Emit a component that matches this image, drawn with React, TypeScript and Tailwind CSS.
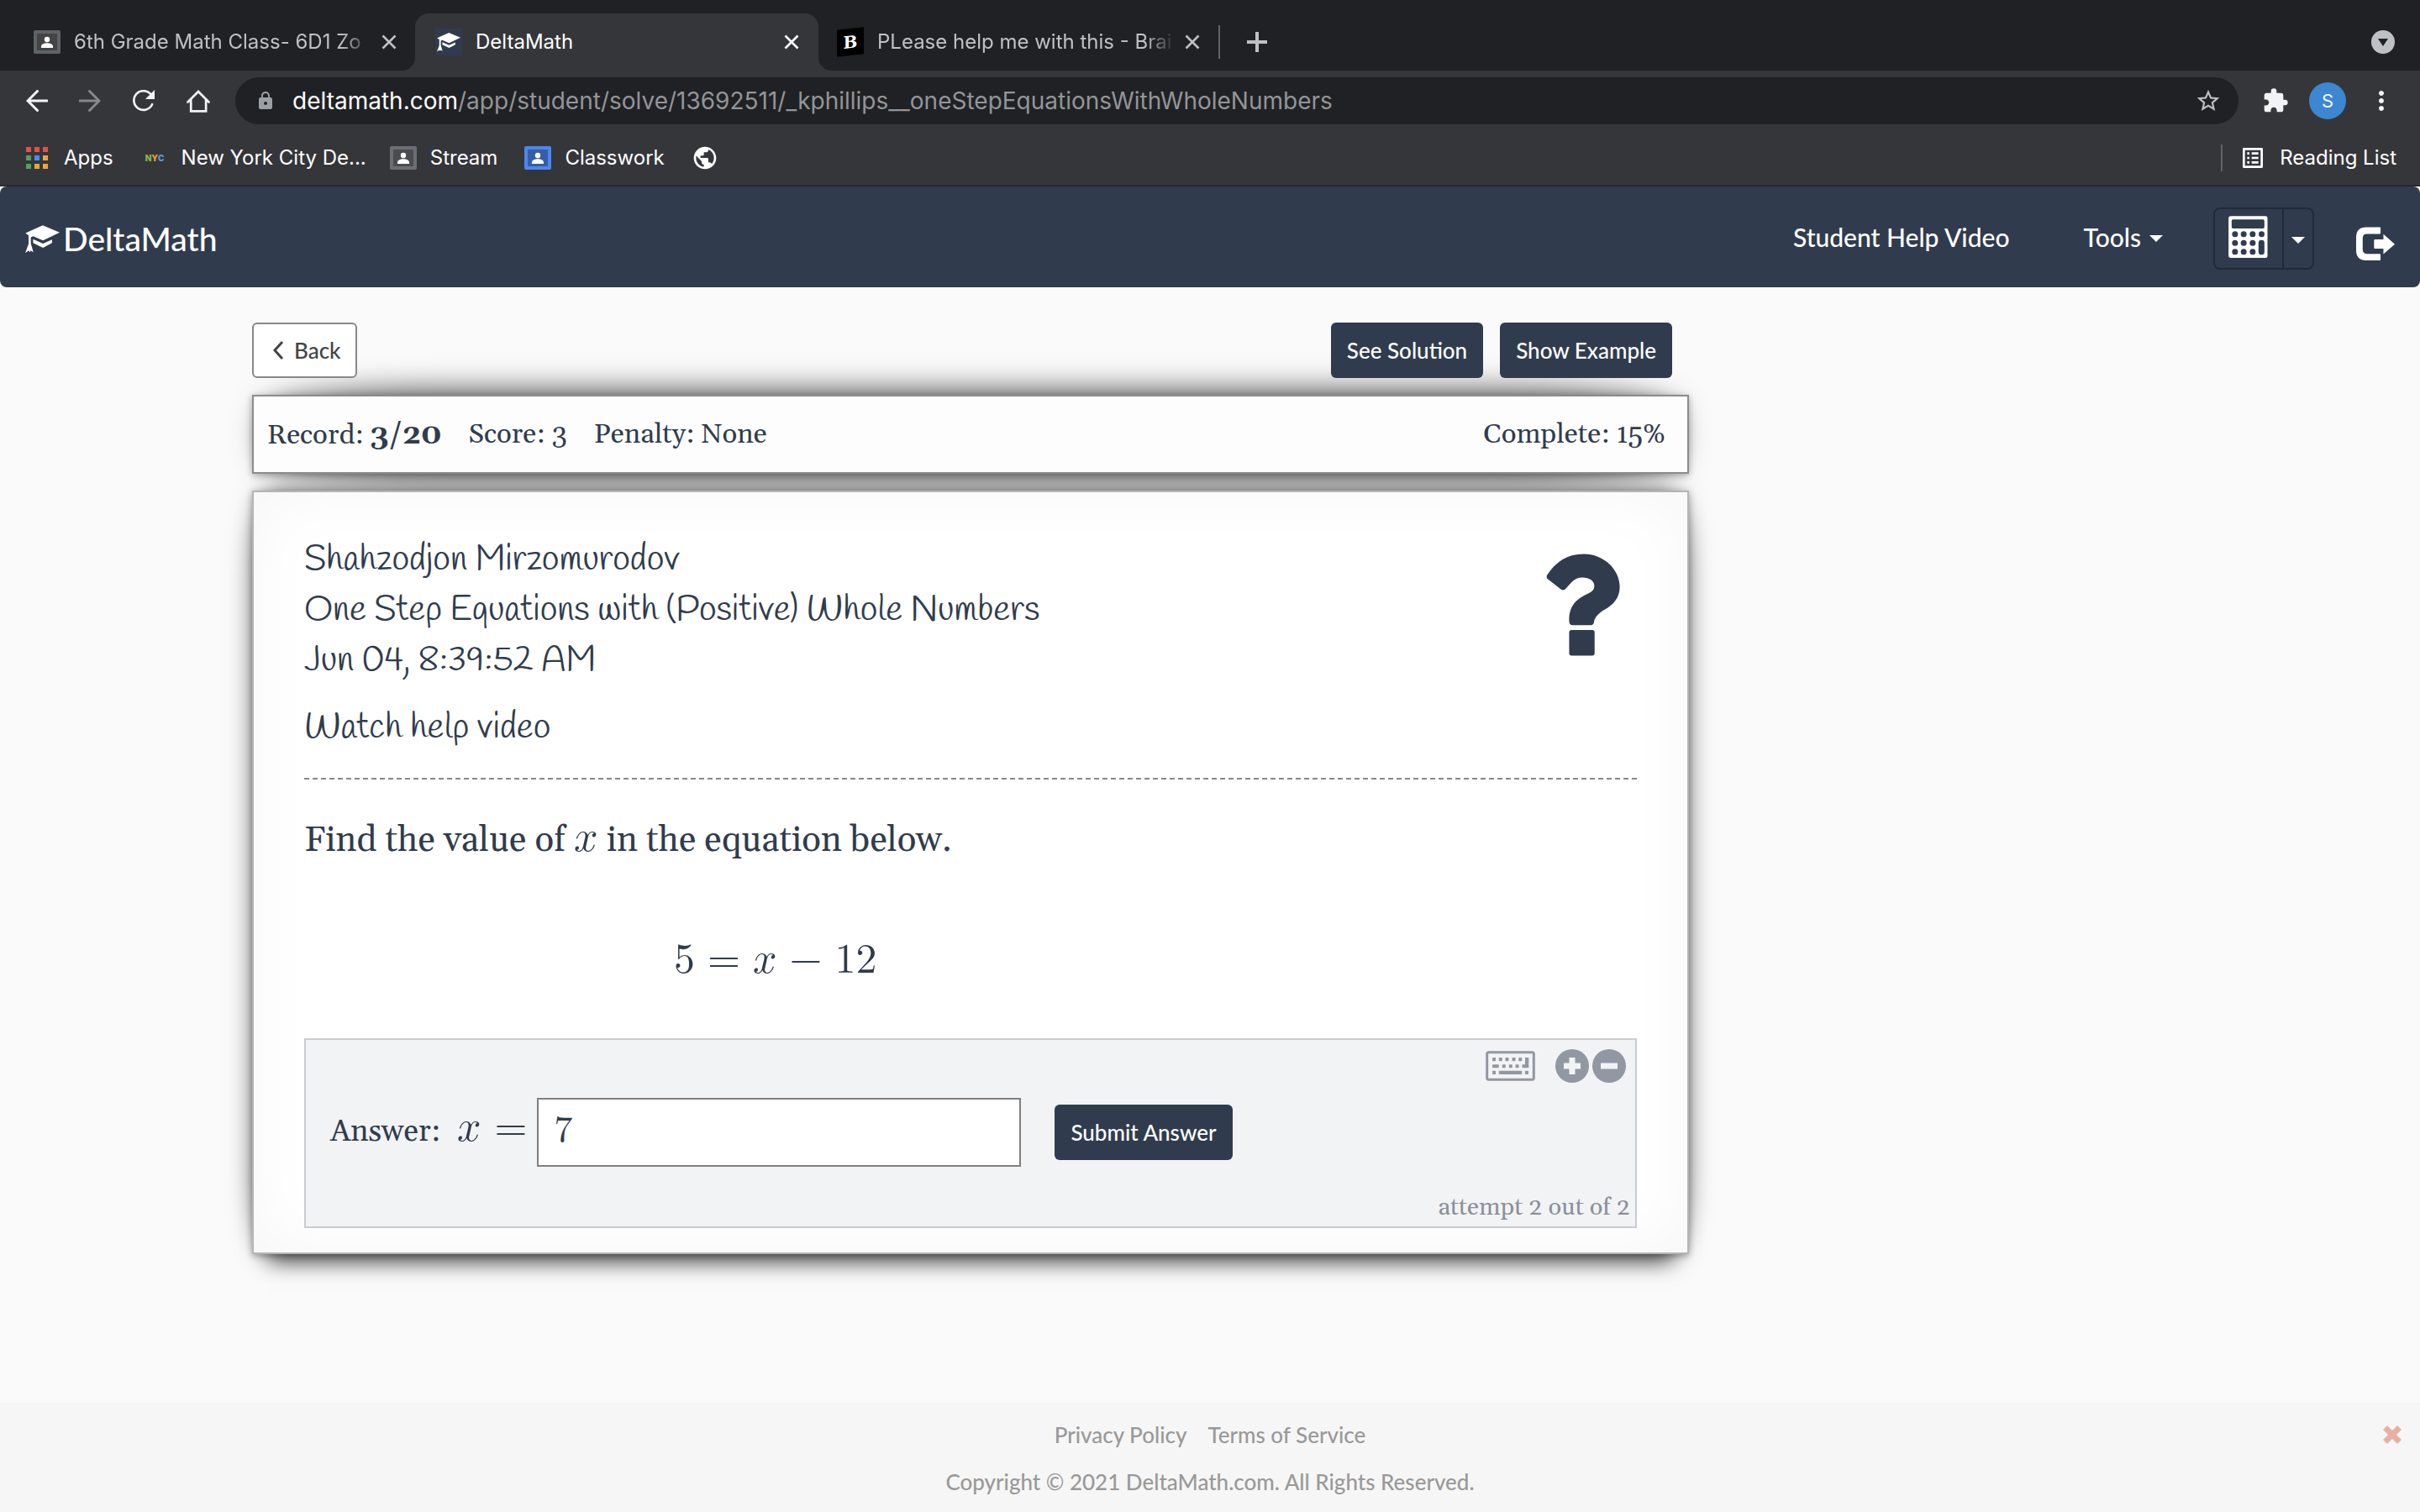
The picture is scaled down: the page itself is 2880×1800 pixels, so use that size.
import React, { useState } from 'react';
import { MdLock, MdExtension, MdStarBorder, MdMoreVert, MdPublic, MdOutlineListAlt } from 'react-icons/md';

interface IconProps {
  className?: string;
}

const appColors = ['#e0524a', '#e0524a', '#e0524a', '#55a05a', '#4b8df8', '#e9a63a', '#55a05a', '#e9a63a', '#e9a63a'];

const CloseIcon = ({ className = '' }: IconProps) => (
  <svg viewBox="0 0 18 18" className={`size-[18px] ${className}`} fill="none" stroke="currentColor" strokeWidth="2.6">
    <path d="M1.5 1.5l15 15M16.5 1.5l-15 15" />
  </svg>
);

const ClassroomIcon = ({ className = '' }: IconProps) => (
  <svg viewBox="0 0 32 28" className={`w-8 h-7 shrink-0 ${className}`}>
    <rect width="32" height="28" rx="2" fill="currentColor" />
    <rect x="4" y="4" width="24" height="20" fill="#000" opacity=".3" />
    <circle cx="16" cy="11" r="3.2" fill="#fff" />
    <path d="M9 21v-2c0-2.400 4-3.800 7-3.800s7 1.400 7 3.800v2z" fill="#fff" />
  </svg>
);

const CapIcon = ({ className = '' }: IconProps) => (
  <svg viewBox="90 146 122 98" className={className} fill="currentColor">
    <path d="M91 174L152 147l60 25-59 28-35-15-8 4v22l9 31-10-6-2 6-5-6-12 9 12-33v-30z" />
    <path d="M118 196l35 15 32-14v12l-32 17-35-17z" />
  </svg>
);

const BackArrow = ({ className = '' }: IconProps) => (
  <svg viewBox="0 0 26 26" className={`size-[26px] ${className}`} fill="none" stroke="currentColor" strokeWidth="3" strokeLinecap="round">
    <path d="M25 13H2M13.500 1.500L2 13l11.500 11.500" />
  </svg>
);

const ReloadIcon = () => (
  <svg viewBox="476 50 84 80" className="w-7 h-[26px]" fill="none">
    <path d="M544 66A35 35 0 1 0 549 103" stroke="currentColor" strokeWidth="8" strokeLinecap="round" />
    <path d="M558 50v34h-34z" fill="currentColor" />
  </svg>
);

const HomeIcon = () => (
  <svg viewBox="667 50 82 80" className="w-7 h-[27px]" fill="none" stroke="currentColor" strokeWidth="8">
    <path d="M671 93l37-37 37 37M682 86v39h53V86" strokeLinecap="round" />
  </svg>
);

const CalculatorIcon = () => (
  <svg viewBox="97 81 140 150" className="w-[47px] h-[50px]">
    <path
      fill="#fff"
      fillRule="evenodd"
      d="M105 82h124q7 0 7 8v133q0 8-7 8H105q-8 0-8-8V90q0-8 8-8zM113 94q-5 0-5 5v22q0 5 5 5h107q5 0 5-5V99q0-5-5-5z"
    />
    <g fill="#303c4d">
      {[146, 178, 209].map(cy => [120, 151, 183].map(cx => <circle key={`${cx}-${cy}`} cx={cx} cy={cy} r="10.500" />))}
      <circle cx="215" cy="146" r="10.500" />
      <rect x="204" y="167" width="21" height="53" rx="10" />
    </g>
  </svg>
);

const SignOutIcon = () => (
  <svg viewBox="552 122 136 118" className="w-[46px] h-10" fill="currentColor">
    <path d="M587 123h49q2 0 2 3v18q0 3-3 3h-45q-15 0-15 15v40q0 15 15 15h45q3 0 3 3v17q0 3-3 3h-48q-35 0-35-36v-45q0-36 35-36z" />
    <path d="M619 166h29v-18l40 35-40 35v-19h-29q-4 0-4-4v-25q0-4 4-4z" />
  </svg>
);

const QuestionIcon = () => (
  <svg viewBox="952 781 247 318" preserveAspectRatio="none" className="w-[88px] h-[122px]" fill="currentColor">
    <path d="M955 848Q1000 782 1077 782C1145 782 1198 830 1198 884C1198 920 1175 940 1150 954C1125 967 1114 980 1112 994Q1110 1003 1102 1003H1040Q1030 1003 1029 992C1027 944 1054 924 1080 911C1105 900 1113 895 1113 881C1113 866 1097 855 1073 855C1045 855 1035 872 1018 890Q1011 897 1003 893L960 862Q951 857 955 848Z" />
    <rect x="1029" y="1018" width="85" height="80" rx="8" />
  </svg>
);

const KeyboardIcon = () => (
  <svg viewBox="52 68 176 107" className="w-[59px] h-9" fill="currentColor">
    <rect x="57" y="73" width="166" height="97" rx="6" fill="none" stroke="currentColor" strokeWidth="9" />
    {[76, 99, 122, 146, 169].map(x => <rect key={x} x={x} y="92" width="12" height="12" rx="2" />)}
    {[111, 135, 158].map(x => <rect key={x} x={x} y="116" width="12" height="12" rx="2" />)}
    <rect x="76" y="116" width="23" height="12" rx="2" />
    <path d="M192 92h13v36h-23v-12h10z" />
    <rect x="76" y="139" width="12" height="12" rx="2" />
    <rect x="99" y="139" width="82" height="12" rx="2" />
    <rect x="192" y="139" width="12" height="12" rx="2" />
  </svg>
);

const Caret = () => (
  <svg viewBox="0 0 16 8" className="w-4 h-2" fill="currentColor">
    <path d="M0 0h16L8 8z" />
  </svg>
);

// A single-letter <mi> is set in math italic by the browser
const Variable = ({ name }: { name: string }) => (
  <math className="font-['Latin_Modern_Math','CMU_Serif','Old_Standard_TT','STIX_Two_Text','Liberation_Serif',serif] text-[50px] leading-[40px]">
    <mi>{name}</mi>
  </math>
);

const BrowserTabs = () => (
  <div className="flex h-[84px] bg-[#202124] pt-4 text-[24px] text-[#bdc1c6]">
    <div className="flex w-[494px] items-center pl-10 pr-[22px]">
      <ClassroomIcon className="text-[#5f6368]" />
      <span className="ml-4 flex-1 whitespace-nowrap mask-r-from-90%">6th Grade Math Class- 6D1 Zo</span>
      <button aria-label="Close tab" className="ml-3"><CloseIcon /></button>
    </div>
    <div className="relative flex w-[480px] items-center rounded-t-2xl bg-[#35363a] pl-6 pr-[23px] text-white">
      <span className="absolute -left-4 bottom-0 size-4 bg-[radial-gradient(circle_at_0_0,transparent_16px,#35363a_16px)]" />
      <span className="absolute -right-4 bottom-0 size-4 bg-[radial-gradient(circle_at_100%_0,transparent_16px,#35363a_16px)]" />
      <span className="flex size-8 items-center justify-center bg-[#303c4d]"><CapIcon className="w-7 h-6" /></span>
      <span className="ml-4 flex-1">DeltaMath</span>
      <button aria-label="Close tab"><CloseIcon /></button>
    </div>
    <div className="flex w-[476px] items-center pl-[22px] pr-[22px]">
      <span className="flex size-8 -skew-y-6 items-center justify-center bg-black font-['DejaVu_Serif',serif] text-xl font-bold text-white">B</span>
      <span className="ml-4 flex-1 whitespace-nowrap mask-r-from-90%">PLease help me with this - Brai</span>
      <button aria-label="Close tab" className="ml-3"><CloseIcon /></button>
    </div>
    <div className="mt-[14px] h-10 w-0.5 bg-[#5f6368]" />
    <button aria-label="New tab" className="ml-[32px]">
      <svg viewBox="0 0 24 24" className="size-6" stroke="currentColor" strokeWidth="4">
        <path d="M12 0v24M0 12h24" />
      </svg>
    </button>
    <button aria-label="Search tabs" className="ml-auto mr-[30px]">
      <svg viewBox="0 0 28 28" className="size-7">
        <circle cx="14" cy="14" r="14" fill="#bdc1c6" />
        <path d="M8 10h12l-6 9z" fill="#202124" />
      </svg>
    </button>
  </div>
);

const AddressBar = () => (
  <div className="flex h-[72px] items-center bg-[#35363a] text-white">
    <div className="flex w-[280px] shrink-0 items-center gap-[37px] pl-[31px] text-[#f1f3f4]">
      <button aria-label="Back"><BackArrow /></button>
      <button aria-label="Forward" className="text-[#86888a]"><BackArrow className="rotate-180" /></button>
      <button aria-label="Reload"><ReloadIcon /></button>
      <button aria-label="Home"><HomeIcon /></button>
    </div>
    <div className="flex h-14 flex-1 items-center rounded-full bg-[#202124] pl-6 pr-5 text-[28px]">
      <MdLock className="size-6 text-[#9aa0a6]" />
      <span className="ml-5 flex-1 whitespace-nowrap text-[#939598]">
        <span className="text-white">deltamath.com</span>/app/student/solve/13692511/_kphillips__oneStepEquationsWithWholeNumbers
      </span>
      <button aria-label="Bookmark this page"><MdStarBorder className="size-8 text-[#bdc1c6]" /></button>
    </div>
    <div className="flex items-center gap-6 pl-7 pr-7 text-[#f1f3f4]">
      <button aria-label="Extensions"><MdExtension className="size-8" /></button>
      <button className="size-11 rounded-full bg-[#3c87cf] text-[22px]">S</button>
      <button aria-label="Menu"><MdMoreVert className="size-9" /></button>
    </div>
  </div>
);

const Bookmarks = () => (
  <div className="flex h-[66px] items-center border-b-2 border-[#26282d] bg-[#35363a] pl-[31px] pr-7 text-[24px] text-white">
    <a href="#" className="flex items-center gap-[19px]">
      <span className="grid grid-cols-3 gap-1">
        {appColors.map((color, i) => <span key={i} className="size-1.5" style={{ backgroundColor: color }} />)}
      </span>
      Apps
    </a>
    <a href="#" className="ml-[38px] flex items-center gap-5">
      <span className="flex font-['Inter',sans-serif] text-[10px] font-black">
        <span className="text-[#7db84a]">N</span><span className="text-[#e9943a]">Y</span><span className="text-[#5b95d8]">C</span>
      </span>
      New York City De...
    </a>
    <a href="#" className="ml-7 flex items-center gap-4"><ClassroomIcon className="text-[#6b6e72]" />Stream</a>
    <a href="#" className="ml-8 flex items-center gap-4"><ClassroomIcon className="text-[#4e86f0]" />Classwork</a>
    <a href="#" aria-label="Bookmark" className="ml-8"><MdPublic className="size-8" /></a>
    <div className="ml-auto mr-5 h-8 w-0.5 bg-[#5f6368]" />
    <button className="flex items-center gap-4"><MdOutlineListAlt className="size-8" />Reading List</button>
  </div>
);

const Navbar = () => (
  <nav className="flex h-[120px] items-center rounded-lg bg-[#303c4d] pl-[30px] pr-[30px] text-[30px] text-white">
    <a href="#" className="mt-1 flex items-center gap-1 text-[39px]"><CapIcon className="w-[41px] h-[33px]" />DeltaMath</a>
    <a href="#" className="ml-auto">Student Help Video</a>
    <button className="ml-[88px] flex items-center gap-2.5">Tools <span className="pt-1"><Caret /></span></button>
    <div className="ml-[60px] mt-1 flex h-[74px] rounded-lg border-2 border-[#1f2b38]">
      <button aria-label="Calculator" className="w-20 pl-4 pb-1"><CalculatorIcon /></button>
      <button aria-label="Calculator options" className="flex w-9 items-center justify-center border-l-2 border-[#1f2b38] pt-1"><Caret /></button>
    </div>
    <button aria-label="Log out" className="ml-[50px] pt-4"><SignOutIcon /></button>
  </nav>
);

const ActionButton = ({ children }: { children: React.ReactNode }) => (
  <button className="h-[66px] rounded-md bg-[#303c4d] px-[19px] text-[26px] text-white">{children}</button>
);

export default function App() {
  const [answer, setAnswer] = useState('7');

  return (
    <div className="flex min-h-screen flex-col bg-white font-['Lato',sans-serif] font-medium text-[#303c4d]">
      <header className="font-['Inter',sans-serif] font-normal">
        <BrowserTabs />
        <AddressBar />
        <Bookmarks />
      </header>
      <Navbar />
      <div className="flex flex-1 flex-col bg-[#fafafa]">
        <main className="isolate ml-[300px] mr-8 max-w-[1710px] pt-[42px] font-['Gelasio','Liberation_Serif',serif] font-normal">
          <div className="flex items-center gap-5 pr-5 font-['Lato',sans-serif] font-medium">
            <button className="mr-auto flex h-[66px] items-center gap-3 rounded-md border-2 border-[#888] bg-white pl-[22px] pr-[18px] text-[26px] text-[#444]">
              <svg viewBox="0 0 14 22" className="w-[14px] h-[22px]" fill="none" stroke="currentColor" strokeWidth="3">
                <path d="M12 1L3 11l9 10" />
              </svg>
              Back
            </button>
            <ActionButton>See Solution</ActionButton>
            <ActionButton>Show Example</ActionButton>
          </div>

          {/* Record bar */}
          <section className="relative mt-5 flex h-[94px] items-center gap-8 border-2 border-[#8c8c8c] bg-[#fdfdfd] pl-4 pr-[26px] pt-0.5 text-[33px] shadow-[0_2px_8px_rgba(0,0,0,0.3)] before:absolute before:inset-x-5 before:inset-y-0 before:-z-10 before:rounded-[200px/20px] before:shadow-[0_0_36px_6px_rgba(0,0,0,0.7)]">
            <span>Record: <b className="text-[35px]">3/20</b></span>
            <span>Score: 3</span>
            <span>Penalty: None</span>
            <span className="ml-auto">Complete: 15%</span>
          </section>

          {/* Problem card */}
          <section className="relative mt-5 border-2 border-[#b5b5b5] bg-white px-[60px] pt-[51px] pb-[29px] shadow-[0_2px_8px_rgba(0,0,0,0.3),0_30px_24px_-20px_rgba(0,0,0,0.5),inset_0_0_80px_rgba(0,0,0,0.04)] before:absolute before:inset-0 before:-z-10 before:rounded-[20px/100px] before:shadow-[0_0_30px_rgba(0,0,0,0.6)]">
            <div className="flex justify-between border-b-2 border-dashed border-[#888] pb-[29px] font-['Handlee','Lato',sans-serif] text-[42px] leading-[60px]">
              <div>
                <p>Shahzodjon Mirzomurodov</p>
                <p>One Step Equations with (Positive) Whole Numbers</p>
                <p>Jun 04, 8:39:52 AM</p>
                <a href="#" className="mt-5 block font-medium">Watch help video</a>
              </div>
              <button aria-label="Help" className="mr-5 mt-[22px] self-start"><QuestionIcon /></button>
            </div>

            <p className="mt-[43px] text-[42px] leading-[60px]">
              Find the value of <Variable name="x" /> in the equation below.
            </p>
            <p className="ml-[440px] mt-[80px] flex items-baseline gap-[15px] font-['Latin_Modern_Math','CMU_Serif','Old_Standard_TT','STIX_Two_Text','Liberation_Serif',serif] text-[50px] leading-[64px]">
              <span>5</span>
              <span>=</span>
              <Variable name="x" />
              <span>−</span>
              <span>12</span>
            </p>

            <div className="mt-[61px] flex h-[226px] flex-col border-2 border-[#c9cccf] bg-[#f2f3f5]">
              <div className="flex items-center justify-end gap-1 pr-[11px] pt-[11px] text-[#9298a2]">
                <button aria-label="Keyboard" className="mr-5"><KeyboardIcon /></button>
                <button aria-label="Zoom in">
                  <svg viewBox="0 0 40 40" className="size-10">
                    <circle cx="20" cy="20" r="20" fill="currentColor" />
                    <path d="M20 10v20M10 20h20" stroke="#f2f3f5" strokeWidth="7" />
                  </svg>
                </button>
                <button aria-label="Zoom out">
                  <svg viewBox="0 0 40 40" className="size-10">
                    <circle cx="20" cy="20" r="20" fill="currentColor" />
                    <path d="M10 20h20" stroke="#f2f3f5" strokeWidth="7" />
                  </svg>
                </button>
              </div>
              <div className="mt-[18px] flex items-center pl-[29px]">
                <label htmlFor="answer" className="flex items-baseline pb-2 text-[36px]">
                  Answer:
                  <span className="ml-5 flex items-baseline gap-4 font-['Latin_Modern_Math','CMU_Serif','Old_Standard_TT','STIX_Two_Text','Liberation_Serif',serif] text-[50px] leading-[60px]">
                    <Variable name="x" />
                    <span>=</span>
                  </span>
                </label>
                <input
                  id="answer"
                  value={answer}
                  onChange={e => setAnswer(e.target.value)}
                  className="ml-3 mr-10 h-[82px] w-[576px] border-2 border-[#7f7f7f] bg-white px-[18px] pb-1 font-['Latin_Modern_Math','CMU_Serif','Old_Standard_TT','STIX_Two_Text','Liberation_Serif',serif] text-[44px] outline-none"
                />
                <div className="font-['Lato',sans-serif] font-medium"><ActionButton>Submit Answer</ActionButton></div>
              </div>
              <p className="mt-auto pr-1.5 pb-1 text-right text-[29px] leading-9 text-[#8a9099]">attempt 2 out of 2</p>
            </div>
          </section>
        </main>

        <footer className="mt-auto grid h-[130px] grid-cols-[1fr_auto_1fr] bg-[#f6f6f6] pt-5 text-center text-[26px] leading-9 text-[#999]">
          <div className="col-start-2">
            <div className="flex justify-center gap-[25px]">
              <a href="#">Privacy Policy</a>
              <a href="#">Terms of Service</a>
            </div>
            <p className="mt-5">Copyright © 2021 DeltaMath.com. All Rights Reserved.</p>
          </div>
          <button aria-label="Dismiss footer" className="mr-[22px] mt-[7px] self-start justify-self-end text-[#e8b0a0]">
            <svg viewBox="0 0 22 22" className="size-[22px]" stroke="currentColor" strokeWidth="7">
              <path d="M2.500 2.500l17 17M19.500 2.500l-17 17" />
            </svg>
          </button>
        </footer>
      </div>
    </div>
  );
}
